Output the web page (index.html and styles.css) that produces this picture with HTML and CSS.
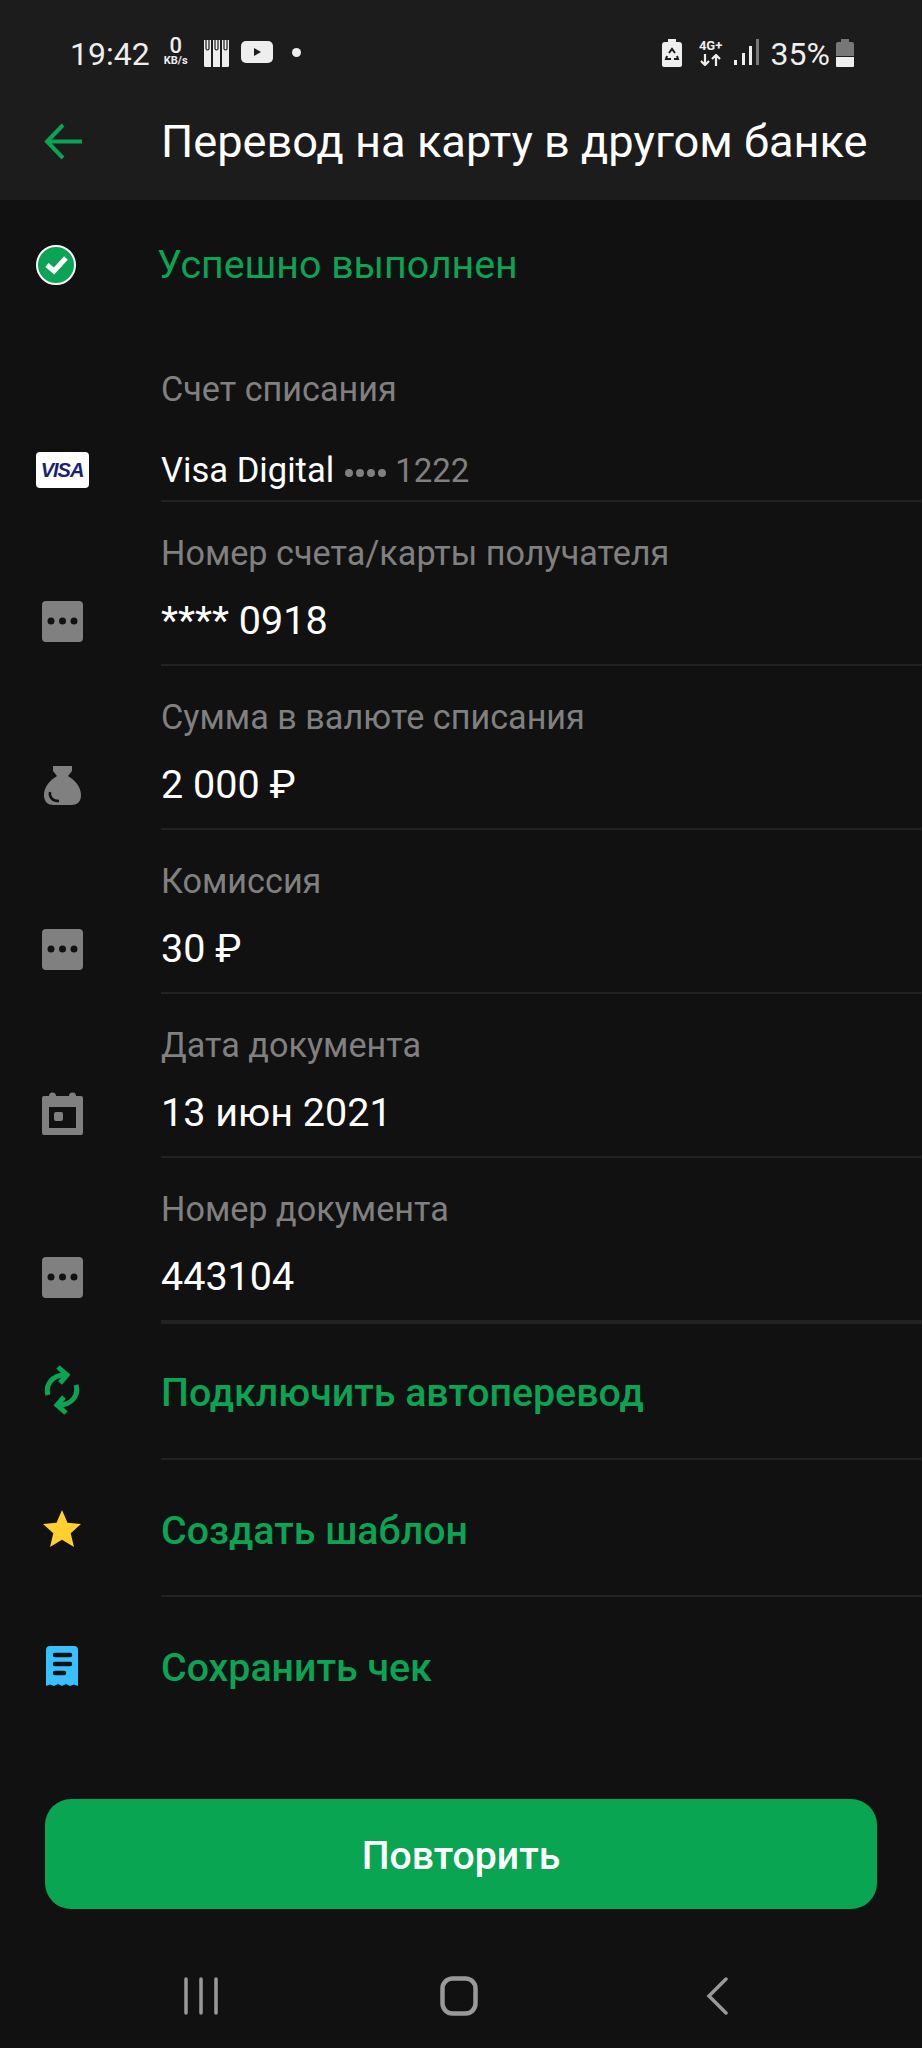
FILE: index.html
```html
<!DOCTYPE html>
<html lang="ru">
<head>
    <meta charset="UTF-8">
    <meta name="viewport" content="width=device-width, initial-scale=1.0">
    <title>Перевод на карту в другом банке</title>
    <link rel="stylesheet" href="styles.css">
</head>
<body>
    <div class="screen">
        <header class="header">
            <div class="statusbar">
                <div class="status-left">
                    <span class="clock">19:42</span>
                    <span class="speed"><b>0</b><small>KB/s</small></span>
                    <svg class="ic-books" width="27" height="28" viewBox="0 0 27 28">
                        <path fill="#eee" d="M1 1h7v27H2.500Q1 28 1 26.500zM10 1h7v27h-7zM19 1h7v25.500Q26 28 24.500 28H19z"/>
                        <path fill="none" stroke="#1c1c1c" stroke-width="1.200" d="M3 1v9q1.500 2 3 0V1M12 1v9q1.500 2 3 0V1M21 1v9q1.500 2 3 0V1"/>
                    </svg>
                    <svg class="ic-yt" width="32" height="22" viewBox="0 0 32 22">
                        <rect width="32" height="22" rx="5" fill="#eee"/>
                        <path fill="#1c1c1c" d="M13 7l7 4-7 4z"/>
                    </svg>
                    <span class="dot"></span>
                </div>
                <div class="status-right">
                    <svg width="20" height="28" viewBox="0 0 20 28">
                        <path fill="#eee" d="M6 0h8v3h3q3 0 3 3v20q0 2-2 2H2q-2 0-2-2V6q0-3 3-3h3z"/>
                        <path fill="none" stroke="#1c1c1c" stroke-width="2" d="M7 14l3-4 3 4M5 17l-1 3h5M15 17l1 3h-4"/>
                    </svg>
                    <span class="net"><b>4G+</b><svg width="21" height="12" viewBox="0 0 21 12"><path fill="none" stroke="#eee" stroke-width="2.200" d="M5 0v10M1 7l4 4 4-4M16 12V2M12 5l4-4 4 4"/></svg></span>
                    <svg class="ic-signal" width="25" height="27" viewBox="0 0 25 27">
                        <rect x="0" y="21" width="3" height="5" fill="#eee"/>
                        <rect x="8" y="14" width="3" height="12" fill="#eee"/>
                        <rect x="15" y="7" width="3" height="19" fill="#eee"/>
                        <rect x="22" y="0" width="3" height="26" fill="#777"/>
                    </svg>
                    <span class="percent">35%</span>
                    <svg width="18" height="28" viewBox="0 0 18 28">
                        <path fill="#777" d="M5 0h8v3h3q2 0 2 2v12H0V5q0-2 2-2h3z"/>
                        <path fill="#eee" d="M0 18h18v9q0 1-1 1H1q-1 0-1-1z"/>
                    </svg>
                </div>
            </div>
            <div class="toolbar">
                <svg class="back" width="38" height="38" viewBox="0 0 38 38">
                    <path fill="none" stroke="#0ba354" stroke-width="4" d="M38 18.500H4M19 2L3 18.500 19 35"/>
                </svg>
                <h1>Перевод на карту в другом банке</h1>
            </div>
        </header>

        <div class="state">
            <svg width="40" height="40" viewBox="0 0 40 40">
                <circle cx="20" cy="20" r="19" fill="#0ba354" stroke="#fff" stroke-width="2"/>
                <path fill="none" stroke="#fff" stroke-width="5" d="M11 20l7 6 12-13"/>
            </svg>
            <span>Успешно выполнен</span>
        </div>

        <section class="details">
            <div class="row row-first">
                <div class="row-label">Счет списания</div>
                <div class="row-icon"><span class="visa">VISA</span></div>
                <div class="row-value">Visa Digital<span class="muted"><span class="pips"><i></i><i></i><i></i><i></i></span>1222</span></div>
            </div>
            <div class="row">
                <div class="row-label">Номер счета/карты получателя</div>
                <div class="row-icon"><svg width="41" height="41" viewBox="0 0 41 41"><rect width="41" height="41" rx="4" fill="#808080"/><circle cx="9" cy="20" r="3.500" fill="#111"/><circle cx="20.500" cy="20" r="3.500" fill="#111"/><circle cx="32" cy="20" r="3.500" fill="#111"/></svg></div>
                <div class="row-value">**** 0918</div>
            </div>
            <div class="row">
                <div class="row-label">Сумма в валюте списания</div>
                <div class="row-icon"><svg width="37" height="39" viewBox="0 0 37 39">
                    <path fill="#808080" d="M9 0h19v5l-4 5c7 4 13 11 13 19 0 7-4 10-10 10H10C4 39 0 36 0 29c0-8 6-15 13-19L9 5z"/>
                    <path fill="none" stroke="#111" stroke-width="2.500" d="M6 26c-1 6 3 9 9 9"/>
                </svg></div>
                <div class="row-value">2 000 ₽</div>
            </div>
            <div class="row">
                <div class="row-label">Комиссия</div>
                <div class="row-icon"><svg width="41" height="41" viewBox="0 0 41 41"><rect width="41" height="41" rx="4" fill="#808080"/><circle cx="9" cy="20" r="3.500" fill="#111"/><circle cx="20.500" cy="20" r="3.500" fill="#111"/><circle cx="32" cy="20" r="3.500" fill="#111"/></svg></div>
                <div class="row-value">30 ₽</div>
            </div>
            <div class="row">
                <div class="row-label">Дата документа</div>
                <div class="row-icon"><svg width="41" height="43" viewBox="0 0 41 43">
                    <path fill="#808080" d="M7 4a3.500 3.500 0 0 1 7 0h13a3.500 3.500 0 0 1 7 0h5q2 0 2 2v35q0 2-2 2H2q-2 0-2-2V6q0-2 2-2z"/>
                    <rect x="7" y="15" width="27" height="21" fill="#111"/>
                    <rect x="12" y="20" width="9" height="9" rx="2" fill="#808080"/>
                </svg></div>
                <div class="row-value">13 июн 2021</div>
            </div>
            <div class="row row-last">
                <div class="row-label">Номер документа</div>
                <div class="row-icon"><svg width="41" height="41" viewBox="0 0 41 41"><rect width="41" height="41" rx="4" fill="#808080"/><circle cx="9" cy="20" r="3.500" fill="#111"/><circle cx="20.500" cy="20" r="3.500" fill="#111"/><circle cx="32" cy="20" r="3.500" fill="#111"/></svg></div>
                <div class="row-value">443104</div>
            </div>
        </section>

        <section class="actions">
            <div class="action action-first">
                <div class="action-icon"><svg width="36" height="50" viewBox="0 0 36 50">
                    <g fill="none" stroke="#0ba354" stroke-width="5">
                        <path d="M4 30C1 20 8 10 21 10M14 2l9 8-7 8"/>
                        <path d="M32 20c3 10-4 20-17 20M22 48l-9-8 7-8"/>
                    </g>
                </svg></div>
                <div class="action-text">Подключить автоперевод</div>
            </div>
            <div class="action">
                <div class="action-icon"><svg width="38" height="37" viewBox="0 0 38 37">
                    <path fill="#ffd030" d="M19 0l5.500 12.800L38 14l-10.300 9.200L31 37l-12-7.300L7 37l3.300-13.800L0 14l13.500-1.200z"/>
                </svg></div>
                <div class="action-text">Создать шаблон</div>
            </div>
            <div class="action">
                <div class="action-icon"><svg width="32" height="40" viewBox="0 0 32 40">
                    <path fill="#38c0ff" d="M4 0h24q4 0 4 4v36l-4-1.500-4 1.500-4-2-4 2-4-2-4 2-4-1.500L0 40V4q0-4 4-4z"/>
                    <g stroke="#111" stroke-width="4.500" stroke-linecap="round">
                        <path d="M9 9h15M9 18h15M9 27h9"/>
                    </g>
                </svg></div>
                <div class="action-text">Сохранить чек</div>
            </div>
        </section>

        <button class="repeat" type="button">Повторить</button>

        <nav class="navbar">
            <svg width="34" height="38" viewBox="0 0 34 38"><path fill="none" stroke="#999" stroke-width="3.500" stroke-linecap="round" d="M2 2v34M17 2v34M32 2v34"/></svg>
            <svg width="38" height="40" viewBox="0 0 38 40"><rect x="2.500" y="2.500" width="33" height="35" rx="10" fill="none" stroke="#999" stroke-width="4.500"/></svg>
            <svg width="22" height="38" viewBox="0 0 22 38"><path fill="none" stroke="#999" stroke-width="3.500" stroke-linecap="round" d="M20 2L3 19l17 17"/></svg>
        </nav>
    </div>
</body>
</html>
```

FILE: styles.css
```css
* {
    box-sizing: border-box;
}
body {
    font-family: Roboto, "Noto Sans", sans-serif;
    margin: 0;
    padding: 0;
    background-color: #111111;
    color: #ffffff;
}
.screen {
    width: 922px;
    height: 2048px;
    overflow: hidden;
    display: flex;
    flex-direction: column;
}
.header {
    height: 200px;
    background-color: #1c1c1c;
}
.statusbar {
    height: 104px;
    padding: 36px 68px 0 70px;
    display: flex;
    justify-content: space-between;
    align-items: flex-start;
    color: #eeeeee;
}
.status-left,
.status-right {
    display: flex;
    align-items: flex-start;
}
.clock {
    font-size: 32px;
    line-height: 36px;
}
.speed {
    width: 32px;
    margin: 1px 11px 0 10px;
    display: flex;
    flex-direction: column;
    align-items: center;
}
.speed b {
    font-size: 22px;
    font-weight: 500;
    line-height: 18px;
}
.speed small {
    font-size: 11px;
    font-weight: bold;
    line-height: 12px;
    white-space: nowrap;
}
.ic-books {
    margin-top: 3px;
}
.ic-yt {
    margin: 5px 0 0 11px;
}
.dot {
    width: 9px;
    height: 9px;
    margin: 12px 0 0 19px;
    border-radius: 50%;
    background-color: #eeeeee;
}
.status-right svg {
    margin-top: 3px;
}
.net {
    width: 30px;
    margin: 3px 8px 0 14px;
    display: flex;
    flex-direction: column;
    align-items: center;
}
.net b {
    font-size: 13px;
    line-height: 14px;
}
.net svg {
    margin-top: 1px;
}
.percent {
    font-size: 32px;
    line-height: 36px;
    margin: 0 6px 0 12px;
}
.toolbar {
    height: 96px;
    display: flex;
    align-items: center;
    padding: 0 0 20px 44px;
}
.toolbar h1 {
    margin: 0 0 2px 79px;
    font-size: 45.2px;
    font-weight: 400;
    white-space: nowrap;
}
.state {
    height: 136px;
    padding: 0 0 7px 36px;
    display: flex;
    align-items: center;
    color: #0ba354;
    font-size: 39.3px;
}
.state span {
    margin-left: 81px;
}
.row {
    display: grid;
    grid-template-columns: 161px 1fr;
    height: 164px;
    padding-top: 33px;
    grid-template-rows: 40px auto;
    row-gap: 24px;
}
.row-label {
    grid-column: 2;
    grid-row: 1;
    color: #808080;
    font-size: 34.2px;
    line-height: 40px;
    white-space: nowrap;
}
.row-icon {
    grid-column: 1;
    grid-row: 2;
    width: 124px;
    height: 48px;
    display: flex;
    align-items: center;
    justify-content: center;
}
.row-value {
    grid-column: 2;
    grid-row: 2;
    font-size: 39.5px;
    line-height: 48px;
    padding-bottom: 19px;
    border-bottom: 2px solid #222222;
    white-space: nowrap;
}
.row-first {
    row-gap: 37px;
}
.row-first .row-value {
    padding-bottom: 5px;
    font-size: 34.6px;
}
.row-last .row-value {
    border-bottom: 4px solid #222222;
}
.muted {
    color: #808080;
    font-size: 33px;
}
.pips {
    display: inline-flex;
    gap: 3px;
    vertical-align: middle;
    margin: 0 9px 0 11px;
}
.pips i {
    width: 8px;
    height: 8px;
    border-radius: 50%;
    background-color: #808080;
}
.visa {
    width: 53px;
    height: 36px;
    background-color: #ffffff;
    border-radius: 4px;
    color: #1a1f71;
    font-family: "Liberation Sans", sans-serif;
    font-size: 20px;
    font-style: italic;
    font-weight: bold;
    letter-spacing: -1px;
    line-height: 36px;
    text-align: center;
}
.action {
    display: grid;
    grid-template-columns: 161px 1fr;
    height: 137px;
}
.action-first {
    height: 140px;
}
.action:last-child {
    height: 138px;
}
.action-icon {
    width: 124px;
    display: flex;
    align-items: center;
    justify-content: center;
}
.action-text {
    display: flex;
    align-items: center;
    color: #0ba354;
    font-size: 39.3px;
    font-weight: 500;
    padding-top: 7px;
    border-bottom: 2px solid #222222;
}
.action:last-child .action-text {
    border-bottom: none;
    padding-top: 3px;
}
.repeat {
    width: 832px;
    height: 110px;
    margin: 64px 0 0 45px;
    flex-shrink: 0;
    background-color: #0aa552;
    color: #ffffff;
    border: none;
    border-radius: 26px;
    font-family: Roboto, "Noto Sans", sans-serif;
    font-size: 39.2px;
    font-weight: 500;
    padding: 4px 0 0 0;
}
.navbar {
    flex: 1;
    display: grid;
    grid-template-columns: repeat(3, 258px);
    justify-items: center;
    align-items: center;
    padding: 35px 0 0 72px;
}
```
